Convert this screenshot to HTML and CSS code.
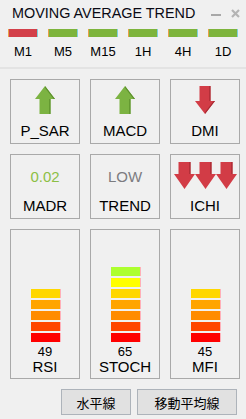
FILE: index.html
```html
<!DOCTYPE html>
<html>
<head>
<meta charset="utf-8">
<link rel="stylesheet" href="styles.css">
</head>
<body>
<div class="panel">
  <div class="title-row">
    <span class="title">MOVING AVERAGE TREND</span>
    <span class="controls">
      <span class="min"></span>
      <svg class="close" width="9" height="9" viewBox="0 0 9 9"><path d="M1 1 L8 8 M8 1 L1 8" stroke="#b4b4b4" stroke-width="2.2"/></svg>
    </span>
  </div>
  <div class="tf">
    <div class="tf-item"><div class="tf-bar red"></div><div class="tf-label">M1</div></div>
    <div class="tf-item"><div class="tf-bar green"></div><div class="tf-label">M5</div></div>
    <div class="tf-item"><div class="tf-bar green"></div><div class="tf-label">M15</div></div>
    <div class="tf-item"><div class="tf-bar green"></div><div class="tf-label">1H</div></div>
    <div class="tf-item"><div class="tf-bar green"></div><div class="tf-label">4H</div></div>
    <div class="tf-item"><div class="tf-bar green"></div><div class="tf-label">1D</div></div>
  </div>
  <div class="sep"></div>
  <div class="grid">
    <div class="box">
      <div class="icon">
        <svg width="20" height="28" viewBox="0 0 20 28"><polygon points="10,0 20,13 15.5,13 15.5,28 4.5,28 4.5,13 0,13" fill="#7cb342"/><polygon points="10,0 20,13 18.6,13 10,1.8" fill="#5b8f2c"/><rect x="14.3" y="13" width="1.2" height="15" fill="#5b8f2c"/></svg>
      </div>
      <div class="label">P_SAR</div>
    </div>
    <div class="box">
      <div class="icon">
        <svg width="20" height="28" viewBox="0 0 20 28"><polygon points="10,0 20,13 15.5,13 15.5,28 4.5,28 4.5,13 0,13" fill="#7cb342"/><polygon points="10,0 20,13 18.6,13 10,1.8" fill="#5b8f2c"/><rect x="14.3" y="13" width="1.2" height="15" fill="#5b8f2c"/></svg>
      </div>
      <div class="label">MACD</div>
    </div>
    <div class="box">
      <div class="icon">
        <svg width="20" height="28" viewBox="0 0 20 28"><polygon points="4.5,0 15.5,0 15.5,15 20,15 10,28 0,15 4.5,15" fill="#d23c46"/><rect x="14.3" y="0" width="1.2" height="15" fill="#a52a33"/><polygon points="20,15 10,28 10,26.2 18.6,15" fill="#a52a33"/></svg>
      </div>
      <div class="label">DMI</div>
    </div>

    <div class="box">
      <div class="icon"><span class="value up">0.02</span></div>
      <div class="label">MADR</div>
    </div>
    <div class="box">
      <div class="icon"><span class="value neutral">LOW</span></div>
      <div class="label">TREND</div>
    </div>
    <div class="box">
      <div class="icon">
        <svg width="63" height="27" viewBox="0 0 63 27">
          <g fill="#d23c46">
            <polygon points="4.5,0 16.5,0 16.5,12 21,12 10.5,27 0,12 4.5,12"/>
            <polygon points="25.5,0 37.5,0 37.5,12 42,12 31.5,27 21,12 25.5,12"/>
            <polygon points="46.5,0 58.5,0 58.5,12 63,12 52.5,27 42,12 46.5,12"/>
          </g>
          <g fill="#a52a33">
            <rect x="15.3" y="0" width="1.2" height="12"/>
            <rect x="36.3" y="0" width="1.2" height="12"/>
            <rect x="57.3" y="0" width="1.2" height="12"/>
          </g>
        </svg>
      </div>
      <div class="label">ICHI</div>
    </div>

    <div class="box tall">
      <div class="meter">
        <div class="lvl c5"></div>
        <div class="lvl c4"></div>
        <div class="lvl c3"></div>
        <div class="lvl c2"></div>
        <div class="lvl c1"></div>
      </div>
      <div class="num">49</div>
      <div class="label">RSI</div>
    </div>
    <div class="box tall">
      <div class="meter">
        <div class="lvl c7"></div>
        <div class="lvl c6"></div>
        <div class="lvl c5"></div>
        <div class="lvl c4"></div>
        <div class="lvl c3"></div>
        <div class="lvl c2"></div>
        <div class="lvl c1"></div>
      </div>
      <div class="num">65</div>
      <div class="label">STOCH</div>
    </div>
    <div class="box tall">
      <div class="meter">
        <div class="lvl c5"></div>
        <div class="lvl c4"></div>
        <div class="lvl c3"></div>
        <div class="lvl c2"></div>
        <div class="lvl c1"></div>
      </div>
      <div class="num">45</div>
      <div class="label">MFI</div>
    </div>
  </div>
  <div class="buttons">
    <button class="btn w70">水平線</button>
    <button class="btn w100">移動平均線</button>
  </div>
</div>
</body>
</html>
```

FILE: styles.css
```css
html, body {
  margin: 0;
  padding: 0;
  background: #f0f0f0;
}
body {
  font-family: "Liberation Sans", Arial, sans-serif;
  color: #000;
  width: 246px;
  height: 419px;
  overflow: hidden;
}
.panel {
  display: flex;
  flex-direction: column;
}
.title-row {
  display: flex;
  align-items: flex-start;
  justify-content: space-between;
  height: 25px;
  padding: 4px 0 0 12px;
}
.title {
  font-size: 14.4px;
  line-height: 18px;
  color: #0a0a14;
}
.controls {
  display: flex;
  align-items: flex-start;
  padding-right: 6px;
}
.min {
  display: block;
  width: 10px;
  height: 2px;
  margin-top: 10px;
  background: #a8a8a8;
}
.close {
  display: block;
  margin-top: 5px;
  margin-left: 10px;
}
.tf {
  display: grid;
  grid-template-columns: repeat(6, 30px);
  column-gap: 10px;
  padding-left: 8px;
}
.tf-item {
  display: flex;
  flex-direction: column;
  align-items: center;
}
.tf-bar {
  width: 30px;
  height: 8px;
  box-sizing: border-box;
  border-left: 1px solid #e8a048;
  border-right: 1px solid #7fd0dc;
}
.tf-bar.red { background: #d3404a; }
.tf-bar.green { background: #7db43c; }
.tf-label {
  margin-top: 7px;
  font-size: 13px;
  line-height: 15px;
}
.sep {
  margin-top: 8px;
  height: 2px;
  background: #e3e3e3;
}
.grid {
  display: grid;
  grid-template-columns: repeat(3, 70px);
  grid-template-rows: 65px 65px 150px;
  gap: 10px;
  padding: 10px 0 0 10px;
}
.box {
  box-sizing: border-box;
  border: 1px solid #a9a9a9;
  display: flex;
  flex-direction: column;
  align-items: center;
  justify-content: space-between;
  padding: 6px 0 3px;
}
.icon {
  height: 28px;
  display: flex;
  align-items: center;
  justify-content: center;
}
.icon svg { display: block; }
.value {
  font-size: 15px;
  line-height: 18px;
  margin-top: 3px;
}
.value.up { color: #8cbf45; }
.value.neutral { color: #7c7c80; }
.label {
  font-size: 15px;
  line-height: 18px;
}
.box.tall {
  justify-content: flex-end;
}
.meter {
  display: flex;
  flex-direction: column;
  gap: 2px;
  margin-left: 1px;
}
.lvl {
  width: 30px;
  height: 9px;
  box-sizing: border-box;
  border-right: 1px solid #ffb0b8;
}
.c1 { background: #ff0000; }
.c2 { background: #ff4500; }
.c3 { background: #ff8c00; }
.c4 { background: #ffa500; }
.c5 { background: #ffd700; }
.c6 { background: #ffff00; }
.c7 { background: #adff2f; }
.num {
  margin-top: 3px;
  font-size: 13px;
  line-height: 13px;
}
.tall .label {
  line-height: 17px;
}
.buttons {
  display: flex;
  justify-content: flex-end;
  gap: 6px;
  padding: 10px 9px 0 0;
}
.btn {
  height: 26px;
  box-sizing: border-box;
  background: #e1e1e1;
  border: 1px solid #adb3ba;
  border-radius: 0;
  padding: 0;
  font-family: "Noto Sans CJK JP", "Noto Sans CJK SC", sans-serif;
  font-size: 13px;
  color: #000;
}
.w70 { width: 70px; }
.w100 { width: 100px; }
```
